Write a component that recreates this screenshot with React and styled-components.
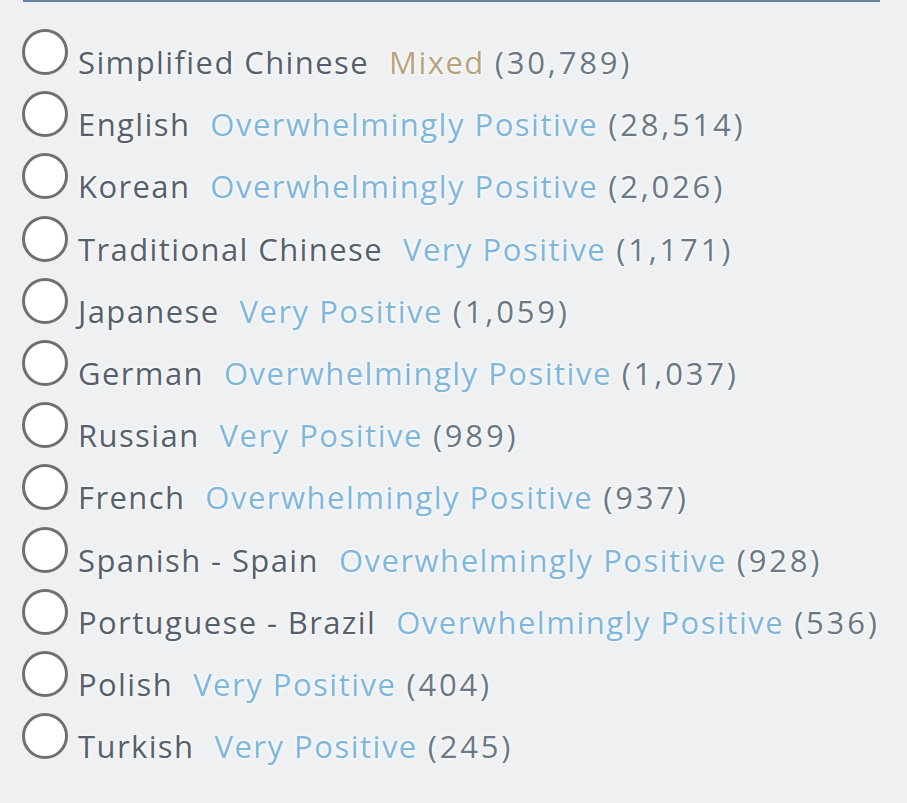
import styled, { createGlobalStyle } from "styled-components"

const GlobalStyle = createGlobalStyle`
  html, body {
    margin: 0;
    padding: 0;
    background: #eef0f2;
  }
`

const Page = styled.div`
  padding: 0 27px 0 23px;
  font-family: "Open Sans", "Noto Sans", sans-serif;
`

const LanguageList = styled.div`
  border-top: 2px solid #6784a3;
  padding-top: 27px;
`

const Row = styled.label`
  display: flex;
  align-items: flex-start;
  height: 62.2px;
  cursor: pointer;
`

const Radio = styled.span`
  flex: none;
  box-sizing: border-box;
  width: 46px;
  height: 46px;
  margin-left: -1px;
  border: 3px solid #6f6f6f;
  border-radius: 50%;
  background: #fff;
`

const Text = styled.span`
  margin-left: 10px;
  margin-top: 11px;
  font-size: 31px;
  line-height: 44px;
  letter-spacing: 1.4px;
  white-space: nowrap;
  color: #56606b;
  text-shadow: 0 0 4px #fff, 0 0 2px #fff;
`

const Rating = styled.span`
  margin-left: 20px;
  letter-spacing: 1.5px;
  color: ${(props) => (props.mixed ? "#b8a37b" : "#7fb6db")};
`

const Count = styled.span`
  margin-left: 10px;
  letter-spacing: 2.8px;
  color: #6b7885;
`

const languages = [
  ["Simplified Chinese", "Mixed", "30,789"],
  ["English", "Overwhelmingly Positive", "28,514"],
  ["Korean", "Overwhelmingly Positive", "2,026"],
  ["Traditional Chinese", "Very Positive", "1,171"],
  ["Japanese", "Very Positive", "1,059"],
  ["German", "Overwhelmingly Positive", "1,037"],
  ["Russian", "Very Positive", "989"],
  ["French", "Overwhelmingly Positive", "937"],
  ["Spanish - Spain", "Overwhelmingly Positive", "928"],
  ["Portuguese - Brazil", "Overwhelmingly Positive", "536"],
  ["Polish", "Very Positive", "404"],
  ["Turkish", "Very Positive", "245"],
]

const App = () => {
  return (
    <Page>
      <GlobalStyle />
      <LanguageList>
        {languages.map(([name, rating, count]) => (
          <Row key={name}>
            <Radio />
            <Text>
              {name}
              <Rating mixed={rating === "Mixed"}>{rating}</Rating>
              <Count>({count})</Count>
            </Text>
          </Row>
        ))}
      </LanguageList>
    </Page>
  )
}

export default App
